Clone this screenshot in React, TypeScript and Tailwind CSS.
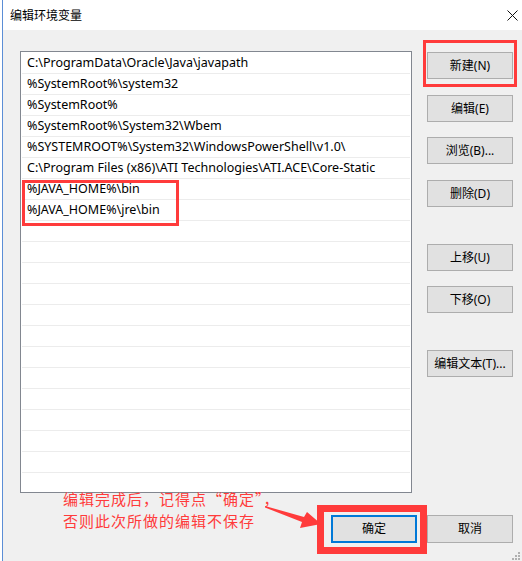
const paths = [
  "C:\\ProgramData\\Oracle\\Java\\javapath",
  "%SystemRoot%\\system32",
  "%SystemRoot%",
  "%SystemRoot%\\System32\\Wbem",
  "%SYSTEMROOT%\\System32\\WindowsPowerShell\\v1.0\\",
  "C:\\Program Files (x86)\\ATI Technologies\\ATI.ACE\\Core-Static",
  "%JAVA_HOME%\\bin",
  "%JAVA_HOME%\\jre\\bin",
];

const sideButtons = [
  { label: "新建(N)", mt: "mt-[1px]" },
  { label: "编辑(E)", mt: "mt-[16px]" },
  { label: "浏览(B)...", mt: "mt-[15px]" },
  { label: "删除(D)", mt: "mt-[16px]" },
  { label: "上移(U)", mt: "mt-[37px]" },
  { label: "下移(O)", mt: "mt-[15px]" },
  { label: "编辑文本(T)...", mt: "mt-[37px]" },
];

const font = "font-['Noto_Sans','Noto_Sans_CJK_SC',sans-serif]";

export default function App() {
  const rows = [...paths, ...Array(21 - paths.length).fill("")];

  return (
    <div className={`relative h-[561px] w-[522px] overflow-hidden bg-white pl-[2px] text-black ${font}`}>
      <div className="flex h-full flex-col border-l border-[#5b8ed6] bg-[#f0f0f0]">
        {/* title bar */}
        <div className="flex h-[30px] items-center justify-between bg-white pl-[7px] pr-[4px]">
          <span className="font-['Noto_Sans_CJK_SC',sans-serif] text-[12px]">编辑环境变量</span>
          <svg width="11" height="11" viewBox="0 0 11 11">
            <path d="M0.5 0.5 L10.5 10.5 M10.5 0.5 L0.5 10.5" stroke="#111" strokeWidth="1" />
          </svg>
        </div>

        {/* list + side buttons */}
        <div className="flex pl-[17px] pr-[9px] pt-[21px]">
          <div className="h-[442px] w-[392px] overflow-hidden border border-[#828790] bg-white p-[1px]">
            {rows.map((p, i) => (
              <div
                key={i}
                className="flex h-[21px] items-center border-b border-[#ececec] pl-[5px] pt-[1px] text-[12.5px] leading-none"
              >
                {p}
              </div>
            ))}
          </div>
          <div className="ml-[15px] flex w-[86px] flex-col">
            {sideButtons.map((b) => (
              <button
                key={b.label}
                type="button"
                className={`${b.mt} flex h-[27px] w-[86px] items-center justify-center border border-[#adadad] bg-[#e1e1e1] text-[12px]`}
              >
                {b.label}
              </button>
            ))}
          </div>
        </div>

        {/* bottom buttons */}
        <div className="mt-[22px] flex justify-end gap-[10px] pr-[9px]">
          <button
            type="button"
            className="flex h-[28px] w-[86px] items-center justify-center border-2 border-[#0078d7] bg-[#e1e1e1] text-[12px]"
          >
            确定
          </button>
          <button
            type="button"
            className="flex h-[28px] w-[86px] items-center justify-center border border-[#adadad] bg-[#e1e1e1] text-[12px]"
          >
            取消
          </button>
        </div>
      </div>

      {/* annotations */}
      <div className="pointer-events-none absolute left-[423px] top-[40px] h-[47px] w-[94px] border-[3px] border-[#ff3b3b]" />
      <div className="pointer-events-none absolute left-[22px] top-[180px] h-[46px] w-[157px] border-[3px] border-[#ff3b3b]" />
      <div className="pointer-events-none absolute left-[317px] top-[505px] h-[49px] w-[110px] border-[7px] border-[#ff3b3b]" />
      <div className="pointer-events-none absolute left-[63px] top-[488px] font-['Noto_Sans_CJK_SC',sans-serif] text-[15px] leading-[22px] tracking-[1px] text-[#ff3b3b]">
        <p>编辑完成后，记得点“确定”，</p>
        <p>否则此次所做的编辑不保存</p>
      </div>
      <svg className="pointer-events-none absolute left-0 top-0" width="522" height="561">
        <polygon
          points="265,506 304,517 307,512 321,524 300,528 302,522 265,507.5"
          fill="#ff3b3b"
        />
        <g fill="#b0b0b0">
          <rect x="518" y="552" width="2" height="2" />
          <rect x="515" y="555" width="2" height="2" />
          <rect x="518" y="555" width="2" height="2" />
          <rect x="512" y="558" width="2" height="2" />
          <rect x="515" y="558" width="2" height="2" />
          <rect x="518" y="558" width="2" height="2" />
        </g>
      </svg>
    </div>
  );
}
